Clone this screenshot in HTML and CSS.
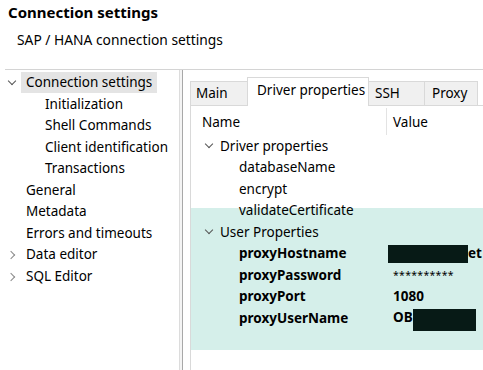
FILE: index.html
```html
<!DOCTYPE html>
<html>
<head>
<meta charset="utf-8">
<link rel="stylesheet" href="styles.css">
</head>
<body>
<header class="header">
  <h1 class="title">Connection settings</h1>
  <p class="subtitle">SAP / HANA connection settings</p>
</header>
<div class="main">
  <nav class="tree">
    <div class="node top expanded selected"><span class="chev down"></span><span class="lbl">Connection settings</span></div>
    <div class="node child"><span class="lbl">Initialization</span></div>
    <div class="node child"><span class="lbl">Shell Commands</span></div>
    <div class="node child"><span class="lbl">Client identification</span></div>
    <div class="node child"><span class="lbl">Transactions</span></div>
    <div class="node top"><span class="chev none"></span><span class="lbl">General</span></div>
    <div class="node top"><span class="chev none"></span><span class="lbl">Metadata</span></div>
    <div class="node top"><span class="chev none"></span><span class="lbl">Errors and timeouts</span></div>
    <div class="node top"><span class="chev right"></span><span class="lbl">Data editor</span></div>
    <div class="node top"><span class="chev right"></span><span class="lbl">SQL Editor</span></div>
  </nav>
  <div class="splitter"></div>
  <section class="editor">
    <div class="tabs">
      <div class="tab first">Main</div>
      <div class="tab active">Driver properties</div>
      <div class="tab">SSH</div>
      <div class="tab">Proxy</div>
    </div>
    <div class="panel">
      <div class="cols">
        <div class="col name">Name</div>
        <div class="col value">Value</div>
      </div>
      <div class="prow group"><span class="pchev"></span><span class="pname">Driver properties</span></div>
      <div class="prow leaf"><span class="pname">databaseName</span></div>
      <div class="prow leaf"><span class="pname">encrypt</span></div>
      <div class="prow leaf"><span class="pname">validateCertificate</span></div>
      <div class="highlight">
        <div class="prow group"><span class="pchev"></span><span class="pname">User Properties</span></div>
        <div class="prow leaf bold"><span class="pname">proxyHostname</span><span class="pval"><span class="redact host"></span>et</span></div>
        <div class="prow leaf bold"><span class="pname">proxyPassword</span><span class="pval pass">**********</span></div>
        <div class="prow leaf bold"><span class="pname">proxyPort</span><span class="pval">1080</span></div>
        <div class="prow leaf bold"><span class="pname">proxyUserName</span><span class="pval">OB<span class="redact user"></span></span></div>
      </div>
    </div>
  </section>
</div>
</body>
</html>
```

FILE: styles.css
```css
* { box-sizing: border-box; }
html, body { margin: 0; padding: 0; }
body {
  width: 483px;
  height: 370px;
  overflow: hidden;
  background: #ffffff;
  color: #000000;
  font-family: "Noto Sans", "DejaVu Sans", sans-serif;
  font-size: 13.5px;
}
.header {
  height: 70px;
  margin-left: 5px;
  border-bottom: 1px solid #d4d4d4;
  padding-top: 1px;
}
.title {
  margin: 0 0 0 3px;
  font-size: 15px;
  font-weight: 700;
  line-height: 22px;
}
.subtitle {
  margin: 8px 0 0 12px;
  font-size: 13.8px;
  line-height: 18px;
}
.main {
  display: flex;
  height: 300px;
}
.tree {
  width: 179px;
  padding-top: 2px;
  flex: none;
}
.node {
  height: 21.5px;
  display: flex;
  align-items: center;
  white-space: nowrap;
}
.node .lbl {
  padding: 0 5px;
  height: 21px;
  line-height: 21px;
}
.node.top { padding-left: 4px; }
.node.child { padding-left: 40px; }
.node.selected .lbl { background: #e4e4e4; }
.chev {
  width: 17px;
  height: 21px;
  position: relative;
  flex: none;
}
.chev.down::before {
  content: "";
  position: absolute;
  left: 5px;
  top: 6px;
  width: 5px;
  height: 5px;
  border-right: 1.5px solid #555;
  border-bottom: 1.5px solid #555;
  transform: rotate(45deg);
}
.chev.right::before {
  content: "";
  position: absolute;
  left: 4px;
  top: 8px;
  width: 5px;
  height: 5px;
  border-right: 1.5px solid #8a8a8a;
  border-bottom: 1.5px solid #8a8a8a;
  transform: rotate(-45deg);
}
.splitter {
  flex: none;
  width: 4px;
  border-left: 1px solid #dcdcdc;
  border-right: 1px solid #a8a8a8;
  background: #f4f4f4;
}
.editor {
  flex: 1;
  min-width: 0;
  padding-left: 7px;
  display: flex;
  flex-direction: column;
}
.tabs {
  height: 35px;
  display: flex;
  align-items: flex-end;
  padding-left: 1px;
  white-space: nowrap;
}
.tab {
  height: 24px;
  line-height: 22px;
  padding: 0 8px 0 5px;
  background: #f0f0f0;
  border: 1px solid #d9d9d9;
  border-bottom: none;
  margin-left: -1px;
}
.tab.first { width: 58px; }
.tab.active {
  line-height: 24px;
  background: #ffffff;
  width: 122px;
  padding-left: 9px;
  position: relative;
  z-index: 1;
  margin-bottom: -1px;
  height: 29px;
}
.tab:nth-child(3) { width: 57px; padding-left: 6px; }
.tab:nth-child(4) { width: 54px; padding-left: 7px; }
.panel {
  flex: 1;
  border-top: 1px solid #d9d9d9;
  border-left: 1px solid #d9d9d9;
  white-space: nowrap;
}
.cols {
  display: flex;
  height: 29px;
  align-items: stretch;
}
.col {
  display: flex;
  align-items: center;
}
.col.name { width: 196px; padding-left: 11px; border-right: 1px solid #e3e3e3; margin: 2px 0 0; }
.col.value { padding-left: 6px; padding-top: 2px; }
.prow {
  height: 21.5px;
  display: flex;
  align-items: center;
}
.prow.group { padding-left: 13px; }
.prow.leaf { padding-left: 48px; }
.pchev {
  width: 16px;
  height: 21px;
  position: relative;
  flex: none;
}
.pchev::before {
  content: "";
  position: absolute;
  left: 2px;
  top: 6px;
  width: 5px;
  height: 5px;
  border-right: 1.5px solid #555;
  border-bottom: 1.5px solid #555;
  transform: rotate(45deg);
}
.pname { width: 154px; flex: none; }
.prow.bold .pname { font-weight: 700; }
.pval { font-weight: 700; white-space: nowrap; }
.pval.pass { font-weight: 400; font-size: 10.5px; letter-spacing: 0.3px; }
.highlight {
  background: #d5efea;
  margin-top: -13px;
  padding-top: 13px;
  padding-bottom: 21px;
}
.redact {
  display: inline-block;
  background: #071a16;
  vertical-align: middle;
}
.redact.host { width: 80px; height: 18px; margin-left: -5px; }
.redact.user { width: 63px; height: 22px; position: relative; top: 2px; }
```
